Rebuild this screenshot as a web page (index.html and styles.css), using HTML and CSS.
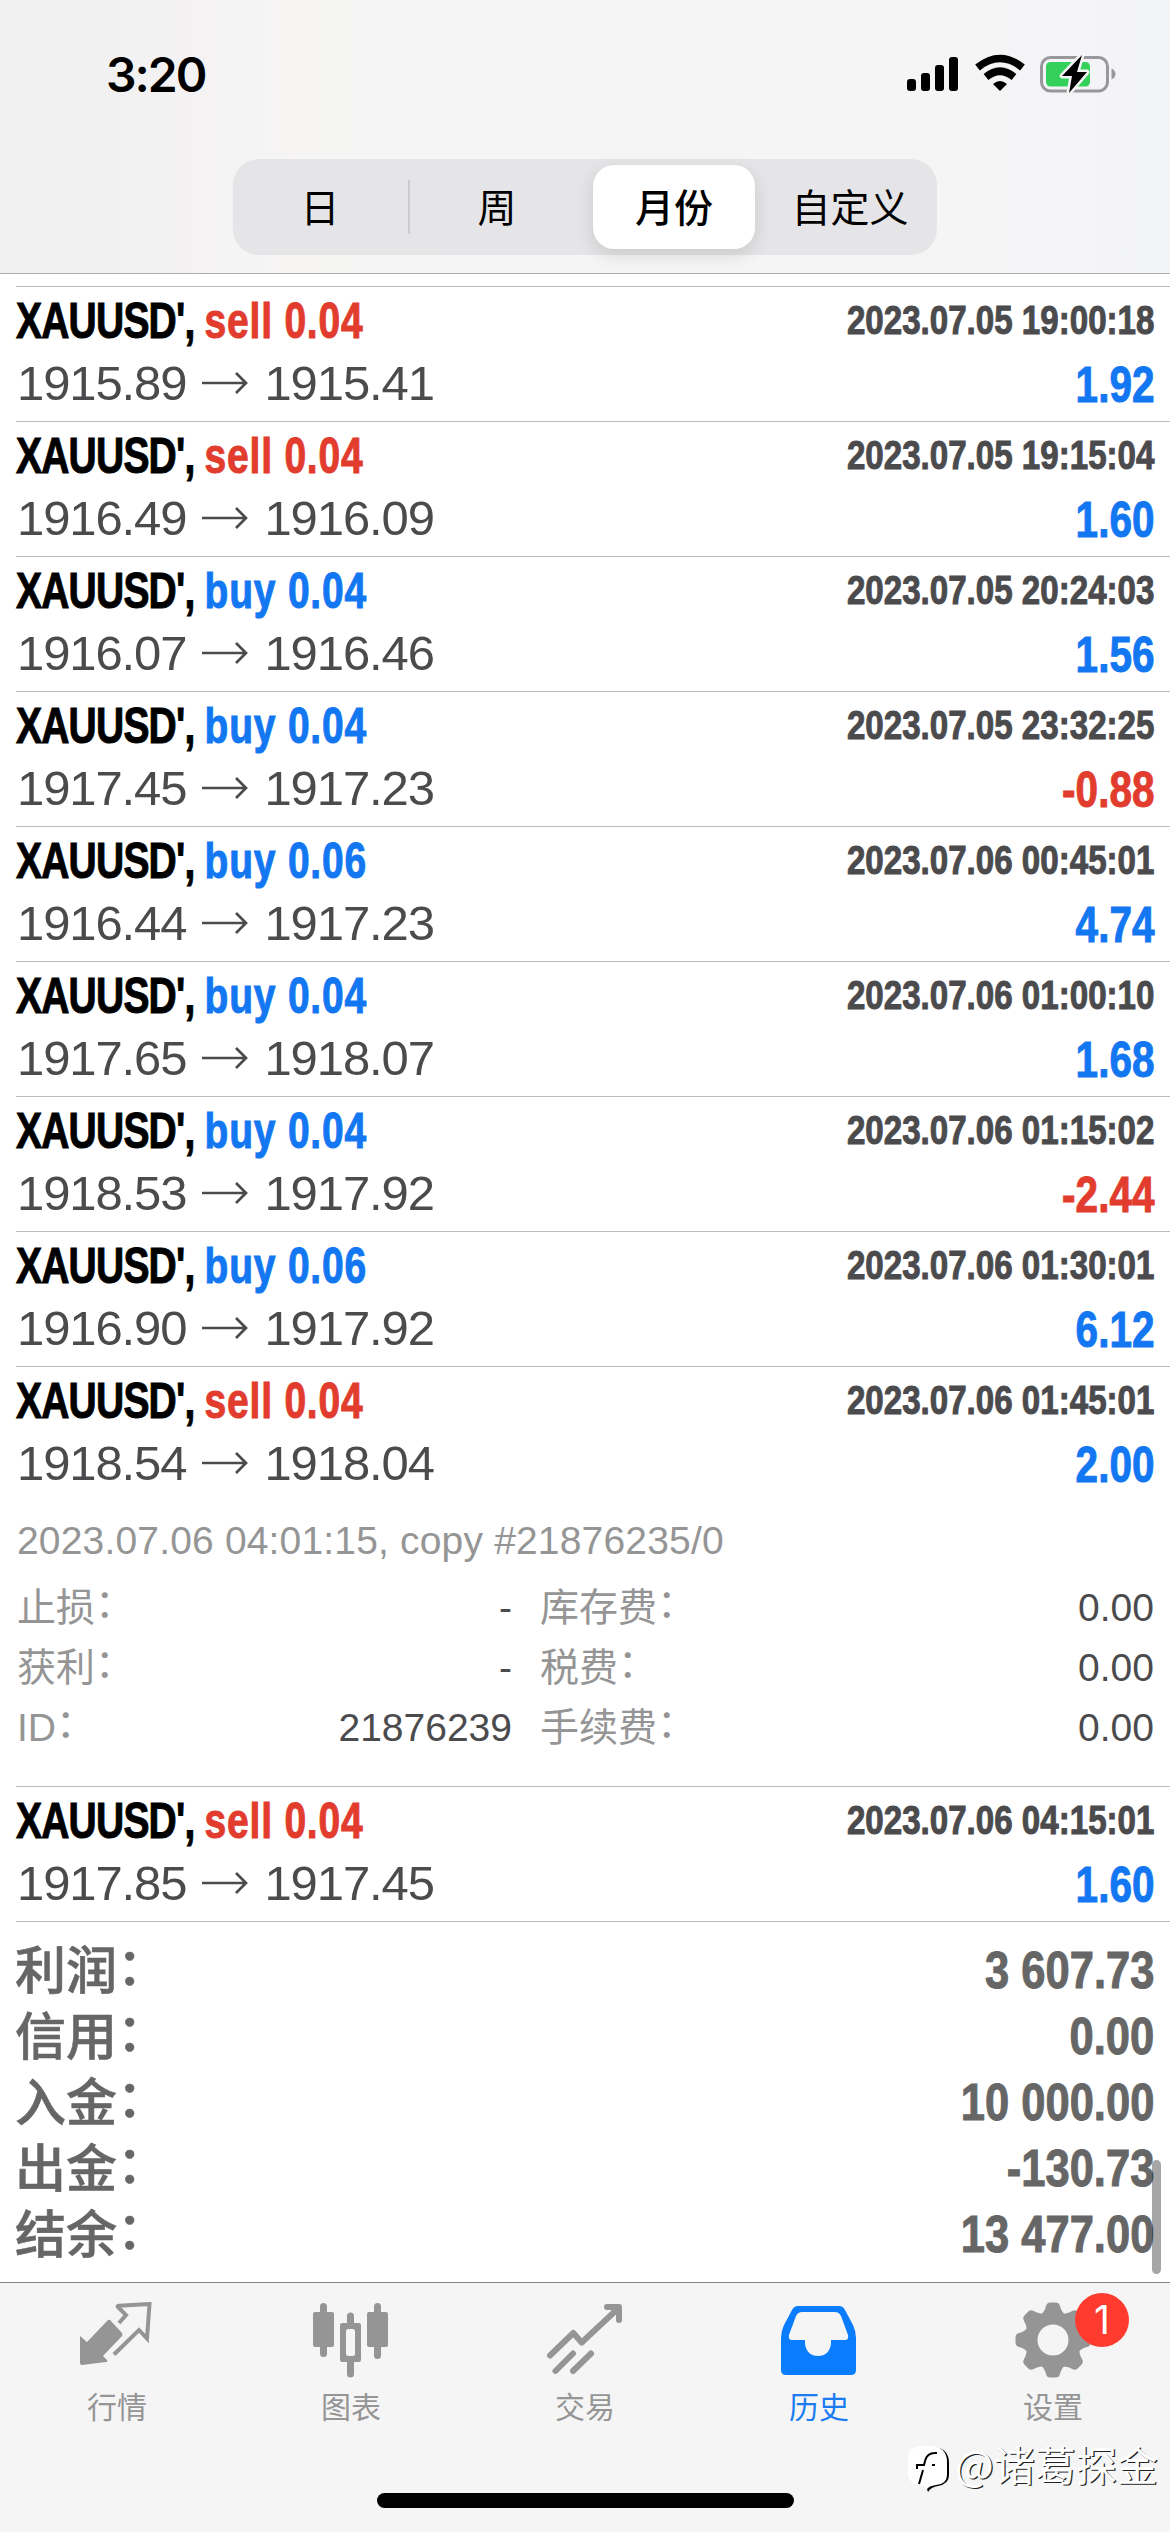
FILE: index.html
```html
<!DOCTYPE html>
<html lang="zh-CN">
<head>
<meta charset="utf-8">
<title>历史</title>
<link rel="stylesheet" href="styles.css">
</head>
<body>
<header class="top">
  <div class="status">
    <span class="clock">3:20</span>
    <svg class="status-icons" width="212" height="44" viewBox="0 0 212 44">
      <rect x="1" y="27" width="9" height="12" rx="3"/><rect x="15" y="21" width="9" height="18" rx="3"/><rect x="29" y="13" width="9" height="26" rx="3"/><rect x="43" y="5" width="9" height="34" rx="3"/>
      <g fill="none" stroke="#000" stroke-width="7.5"><path d="M71.500 15.500Q94 -2.500 116.500 15.500"/><path d="M80 25Q94 13.500 108 25"/></g>
      <path d="M87 32Q94 26 101 32L94 39Z"/>
      <rect x="135.500" y="5.500" width="66" height="33.500" rx="9" fill="none" stroke="#98989c" stroke-width="3"/>
      <path d="M205.500 16.500q4 2 4 5.500t-4 5.500z" fill="#98989c"/>
      <rect x="140" y="10" width="44" height="24.500" rx="4.500" fill="#33d15b"/>
      <path d="M176 3L156 24H166L163 41L181 20H171Z" stroke="#f5f5f6" stroke-width="5" paint-order="stroke" stroke-linejoin="round"/>
    </svg>
  </div>
  <nav class="segments">
    <span class="seg day">日</span><i class="divider"></i><span class="seg week">周</span><span class="seg month">月份</span><span class="seg custom">自定义</span>
  </nav>
</header>
<main class="list" id="list"></main>
<footer class="tabs">
  <div class="tab"><svg width="76" height="76" viewBox="0 0 76 76"><path fill="#959595" d="M1 34L8 40L29 18Q31 17 32 19L43 31Q44 33 43 34L24 54L28 58Q29 60 27 60L3 63Q1 63 1 61Z"/><path fill="none" stroke="#959595" stroke-width="4" d="M40 21L47 13L39 5Q38 4 40 3.800L70.500 2L68 36.500L60 28L35 52.500"/></svg>行情</div>
  <div class="tab"><svg width="76" height="76" viewBox="0 0 76 76"><g fill="#959595"><rect x="0" y="10" width="21" height="35" rx="2"/><rect x="7" y="1" width="7" height="54" rx="3.500"/><rect x="54" y="10" width="21" height="35" rx="2"/><rect x="61" y="1" width="7" height="56" rx="3.500"/><path fill-rule="evenodd" d="M34 21V14a3.500 3.500 0 0 1 7 0v7h5q2 0 2 2v35q0 2-2 2h-5v12a3.500 3.500 0 0 1-7 0V60h-5q-2 0-2-2V23q0-2 2-2ZM35.500 27q-2.500 0-2.500 2.500v22q0 2.500 2.500 2.500h4q2.500 0 2.500-2.500v-22q0-2.500-2.500-2.500z"/></g></svg>图表</div>
  <div class="tab"><svg width="76" height="76" viewBox="0 0 76 76"><g fill="none" stroke="#959595" stroke-width="6" stroke-linecap="round" stroke-linejoin="round"><path d="M3 53.500L26.300 31L34.700 40.500L71 6.500M60 5H72V18"/><path d="M8.500 69L26 51.500M26 69L44 51.500"/></g></svg>交易</div>
  <div class="tab active"><svg width="76" height="76" viewBox="0 0 76 76"><path fill="#0a7cfe" fill-rule="evenodd" d="M17 4H58Q62 4 64 8L72 23Q75 29 75 36V68Q75 73 70 73H5Q0 73 0 68V36Q0 29 3 23L11 8Q13 4 17 4ZM21 10Q17 10 15 14L8 33Q7 38 11 38H24V42Q26 54 37 54Q48 54 50 42V38H64Q68 38 67 33L60 14Q58 10 54 10Z"/></svg>历史</div>
  <div class="tab"><svg width="76" height="76" viewBox="-38 -38 76 76"><g fill="#959595"><circle r="22" fill="none" stroke="#959595" stroke-width="13"/><path id="tooth" d="M-13 -24Q-8 -29 -7 -34Q-6 -37.500 -3 -37.500H3Q6 -37.500 7 -34Q8 -29 13 -24Z"/><use href="#tooth" transform="rotate(45)"/><use href="#tooth" transform="rotate(90)"/><use href="#tooth" transform="rotate(135)"/><use href="#tooth" transform="rotate(180)"/><use href="#tooth" transform="rotate(225)"/><use href="#tooth" transform="rotate(270)"/><use href="#tooth" transform="rotate(315)"/></g></svg>设置<b class="badge">1</b></div>
</footer>
<div class="home-bar"></div>
<div class="scroll-thumb"></div>
<div class="watermark"><svg width="44" height="52" viewBox="0 0 44 52"><path fill="#000" d="M28 2Q42 4 42 18V30Q42 39 31 41Q24 42 21 47L20 44L26 38Z"/><path fill="#fff" d="M15 1H26Q40 3 40 17V30Q40 39 29 40Q22 41 19 44Q17 40 13 40Q1 39 1 27V13Q1 2 15 1Z"/><path fill="none" stroke="#000" stroke-width="2" d="M30 8Q20 7 18 16L17 20H10V24M16 25L12 39M25 20H28"/></svg><span>@诸葛探金</span></div>
<script src="app.js"></script>
</body>
</html>
```
FILE: styles.css
```css
* { box-sizing: border-box; }
body { margin: 0; width: 1170px; height: 2532px; position: relative; display: flex; flex-direction: column; overflow: hidden; background: #fff; font-family: "Liberation Sans", "Noto Sans CJK SC", sans-serif; color: #4b4b4e; }
.top { height: 274px; flex: none; border-bottom: 1px solid #adadad; background: linear-gradient(90deg, #f0f0f0 0, #f4f2f3 200px, #f6f5f4 290px, #f5f5f5 600px, #f5f5f6 950px, #f3f4f7 1170px); }
.status { height: 159px; display: flex; justify-content: space-between; padding: 52px 52px 0 106px; }
.clock { font: 600 48px/45px Inter, sans-serif; color: #000; letter-spacing: -2px; }
.segments { width: 704px; height: 96px; margin-left: 233px; border-radius: 26px; background: #e5e5e7; display: flex; align-items: center; padding: 6px; color: #000; font: 400 39px/80px "Noto Sans CJK SC", sans-serif; text-align: center; }
.seg { height: 84px; }
.day { width: 169px; padding-right: 7px; }
.divider { width: 2px; height: 54px; background: #ccccce; }
.week { width: 183px; padding-right: 9px; }
.month { width: 162px; border-radius: 21px; background: #fff; font-weight: 500; box-shadow: 0 6px 18px rgba(0,0,0,.12); }
.custom { flex: 1; padding-left: 14px; }
.list { height: 2008px; flex: none; padding-top: 12px; }
.trade { height: 135px; margin-left: 16px; padding-right: 16px; border-top: 1px solid #bbb; display: grid; grid-template: 64px 64px / 1fr auto; white-space: nowrap; }
.trade.open { height: 420px; grid-template-rows: 64px 64px 64px 1fr; }
/* Condensed bold faces are the regular bold narrowed towards their aligned edge. */
.sym, .when, .gain, .total b { font-weight: 700; -webkit-text-stroke: 1px currentColor; }
.sym { font-size: 50px; line-height: 68px; color: #000; letter-spacing: -1px; transform: scaleX(.78); transform-origin: left; }
.sym span { letter-spacing: 1px; }
.sell { color: #e23c2e; }
.buy, .up { color: #1377f2; }
.down { color: #e23c2e; }
.when { font-size: 40px; line-height: 67px; text-align: right; transform: scaleX(.828); transform-origin: right; }
.price { font-size: 49px; line-height: 68px; letter-spacing: -1.1px; display: flex; align-items: center; padding-left: 1px; }
.price svg { margin: 0 16px 0 16px; }
.gain { font-size: 50px; line-height: 69px; text-align: right; transform: scaleX(.81); transform-origin: right; }
.note { grid-column: 1 / 3; color: #959595; font-size: 39px; line-height: 91px; letter-spacing: .17px; padding-left: 1px; }
.detail { grid-column: 1 / 3; display: grid; grid-template: repeat(3, 60px) / 495px 614px; column-gap: 28px; padding: 19px 0 0 1px; font-size: 39px; line-height: 60px; }
.pair { display: flex; justify-content: space-between; }
.pair > span { color: #959595; }
.colon { vertical-align: 4px; line-height: 1; }
.totals { margin-left: 16px; padding: 12px 16px 0 0; border-top: 1px solid #bbb; color: #666; }
.total { height: 66px; display: flex; justify-content: space-between; font: 500 51px/66px "Noto Sans CJK SC", sans-serif; }
.total > span { margin-left: -1px; -webkit-text-stroke: .6px currentColor; }
.total b { font-family: "Liberation Sans", sans-serif; font-size: 52px; line-height: 72px; transform: scaleX(.837); transform-origin: right; }
.tabs { height: 250px; background: #f5f5f5; border-top: 1px solid #858585; display: grid; grid-template-columns: repeat(5, 234px); }
.tab { position: relative; display: flex; flex-direction: column; align-items: center; padding-top: 19px; color: #959595; font: 400 30px/54px "Noto Sans CJK SC", sans-serif; }
.active { color: #1b7cf2; }
.badge { position: absolute; left: 139px; top: 10px; width: 54px; height: 54px; border-radius: 50%; background: #ff3b30; color: #fff; font: 400 39px/54px Inter, sans-serif; text-align: center; }
.home-bar { position: absolute; left: 377px; top: 2493px; width: 417px; height: 15px; border-radius: 8px; background: #000; }
.scroll-thumb { position: absolute; left: 1152px; top: 2160px; width: 9px; height: 114px; border-radius: 5px; background: rgba(0,0,0,.35); }
.watermark { position: absolute; left: 907px; top: 2445px; display: flex; color: #fff; font: 400 41px/36px "Noto Sans CJK SC", sans-serif; text-shadow: 1.2px 1.2px 0 #222; }
.watermark span { margin-left: 4px; }
```
FILE: app.js
```js
const arrow = '<svg width="46" height="26" viewBox="0 0 46 26"><path d="M0 13H44M34 3L44 13L34 23" fill="none" stroke="#4b4b4e" stroke-width="2.700"/></svg>';
const trades = [
  ['sell', '0.04', '2023.07.05 19:00:18', '1915.89', '1915.41', '1.92'],
  ['sell', '0.04', '2023.07.05 19:15:04', '1916.49', '1916.09', '1.60'],
  ['buy', '0.04', '2023.07.05 20:24:03', '1916.07', '1916.46', '1.56'],
  ['buy', '0.04', '2023.07.05 23:32:25', '1917.45', '1917.23', '-0.88'],
  ['buy', '0.06', '2023.07.06 00:45:01', '1916.44', '1917.23', '4.74'],
  ['buy', '0.04', '2023.07.06 01:00:10', '1917.65', '1918.07', '1.68'],
  ['buy', '0.04', '2023.07.06 01:15:02', '1918.53', '1917.92', '-2.44'],
  ['buy', '0.06', '2023.07.06 01:30:01', '1916.90', '1917.92', '6.12'],
  ['sell', '0.04', '2023.07.06 01:45:01', '1918.54', '1918.04', '2.00', true],
  ['sell', '0.04', '2023.07.06 04:15:01', '1917.85', '1917.45', '1.60']
];
const label = (text) => `<span>${text}<span class="colon">：</span></span>`;
const pairs = [['止损', '-'], ['库存费', '0.00'], ['获利', '-'], ['税费', '0.00'], ['ID', '21876239'], ['手续费', '0.00']];
const detail = '<div class="note">2023.07.06 04:01:15, copy #21876235/0</div><div class="detail">' +
  pairs.map(([k, v]) => `<div class="pair">${label(k)}${v}</div>`).join('') + '</div>';
const totals = [['利润', '3 607.73'], ['信用', '0.00'], ['入金', '10 000.00'], ['出金', '-130.73'], ['结余', '13 477.00']];
document.getElementById('list').innerHTML = trades.map(([side, vol, when, from, to, gain, open]) =>
  `<section class="trade${open ? ' open' : ''}"><div class="sym">XAUUSD', <span class="${side}">${side} ${vol}</span></div><div class="when">${when}</div><div class="price">${from}${arrow}${to}</div><div class="gain ${gain[0] === '-' ? 'down' : 'up'}">${gain}</div>${open ? detail : ''}</section>`).join('') +
  '<section class="totals">' + totals.map(([k, v]) => `<div class="total">${label(k)}<b>${v}</b></div>`).join('') + '</section>';
```
